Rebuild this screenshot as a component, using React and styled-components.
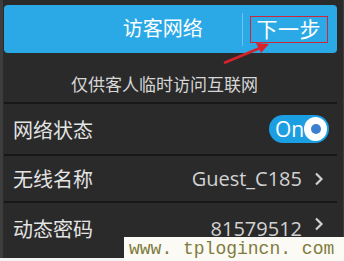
import React from 'react';
import styled, { createGlobalStyle } from 'styled-components';

const Global = createGlobalStyle`
  html, body {
    margin: 0;
    padding: 0;
    background: #f4f4f4;
  }
  * {
    box-sizing: border-box;
  }
`;

const font = `"Open Sans", "Noto Sans CJK SC", sans-serif`;

const Screen = styled.div`
  position: relative;
  width: 344px;
  height: 261px;
  overflow: hidden;
  font-family: ${font};
  background: #f4f4f4;
`;

const Panel = styled.div`
  display: flex;
  flex-direction: column;
  height: 258px;
  padding: 5px 6px 0 4px;
  border-left: 3px solid #3d3d3d;
  border-right: 1px solid #3d3d3d;
  background: #2a2a2a;
`;

const Header = styled.div`
  display: flex;
  align-items: center;
  height: 48px;
  margin-left: -3px;
  border-radius: 4px;
  background: #2ba9e6;
`;

const Title = styled.div`
  flex: 1;
  padding-left: 80px;
  text-align: center;
  color: #fff;
  font-size: 20px;
  line-height: 1;
`;

const Divider = styled.div`
  width: 1px;
  height: 33px;
  background: #69c4ef;
`;

const NextButton = styled.div`
  margin: 0 9px 0 7px;
  padding: 0 6px;
  height: 27px;
  border: 1px solid #c8283a;
  color: #fff;
  font-size: 21px;
  line-height: 24px;
  letter-spacing: 0.5px;
`;

const List = styled.div`
  display: flex;
  flex-direction: column;
  margin-top: 12px;
  margin-left: -3px;
`;

const Note = styled.div`
  height: 39px;
  display: flex;
  align-items: center;
  justify-content: center;
  padding-right: 12px;
  color: #d6d6d6;
  font-size: 17px;
  border-bottom: 2px solid #181818;
`;

const Row = styled.div`
  display: flex;
  align-items: center;
  height: ${p => p.$h}px;
  padding: 0 8px 0 9px;
  border-bottom: ${p => (p.$last ? 'none' : '2px solid #181818')};
  color: #e4e4e4;
  font-size: 20px;
`;

const Label = styled.div`
  flex: 1;
`;

const Value = styled.div`
  color: #d2d2d2;
  font-size: 20px;
  margin-right: 12px;
`;

const Chevron = styled.svg`
  width: 10px;
  height: 14px;
  margin-right: 5px;
  margin-top: ${p => p.$up || 0}px;
`;

const Toggle = styled.div`
  display: flex;
  align-items: center;
  justify-content: space-between;
  width: 60px;
  height: 28px;
  padding: 0 2px 0 6px;
  border-radius: 14px;
  background: #1c9ee3;
  color: #fff;
  font-size: 21px;
  line-height: 1;
`;

const Knob = styled.div`
  display: flex;
  align-items: center;
  justify-content: center;
  width: 24px;
  height: 24px;
  border-radius: 50%;
  background: #fff;

  &::after {
    content: '';
    width: 10px;
    height: 10px;
    border-radius: 50%;
    background: #3a7fd0;
  }
`;

const Arrow = styled.svg`
  position: absolute;
  left: 220px;
  top: 40px;
`;

const Watermark = styled.div`
  position: absolute;
  left: 124px;
  top: 237px;
  width: 220px;
  height: 24px;
  padding-left: 5px;
  background: #fbfaf4;
  color: #7f7c3e;
  font-family: "Liberation Mono", monospace;
  font-size: 18px;
  line-height: 24px;
  white-space: pre;
`;

function ChevronIcon({ up }) {
  return (
    <Chevron viewBox="0 0 10 14" $up={up}>
      <path d="M2 1.5 L7.5 7 L2 12.5" fill="none" stroke="#d0d0d0" strokeWidth="2.2" />
    </Chevron>
  );
}

export default function App() {
  return (
    <Screen>
      <Global />
      <Panel>
        <Header>
          <Title>访客网络</Title>
          <Divider />
          <NextButton>下一步</NextButton>
        </Header>
        <List>
          <Note>仅供客人临时访问互联网</Note>
          <Row $h={52}>
            <Label>网络状态</Label>
            <Toggle>
              On
              <Knob />
            </Toggle>
          </Row>
          <Row $h={47}>
            <Label>无线名称</Label>
            <Value>Guest_C185</Value>
            <ChevronIcon />
          </Row>
          <Row $h={50} $last>
            <Label>动态密码</Label>
            <Value>81579512</Value>
            <ChevronIcon up={-8} />
          </Row>
        </List>
      </Panel>
      <Arrow width="52" height="26" viewBox="0 0 52 26">
        <line x1="4" y1="23" x2="40" y2="8" stroke="#d8222b" strokeWidth="2.5" />
        <polygon points="49,4 36,3 41,13" fill="#d8222b" />
      </Arrow>
      <Watermark>www. tplogincn. com</Watermark>
    </Screen>
  );
}
